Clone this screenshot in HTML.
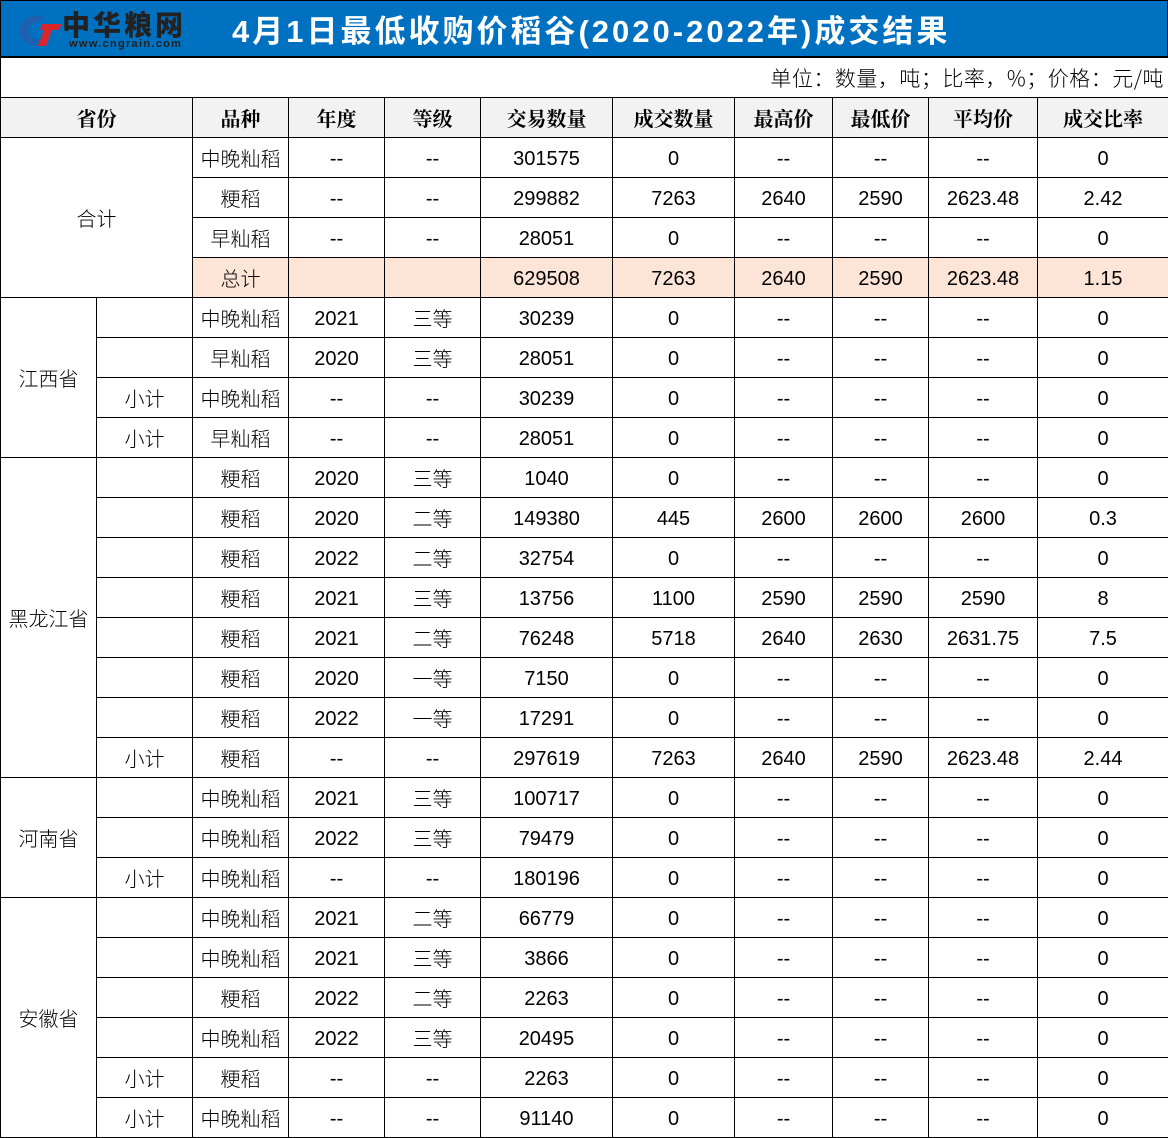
<!DOCTYPE html>
<html><head><meta charset="utf-8"><style>
*{margin:0;padding:0;box-sizing:border-box}
body{width:1168px;height:1138px;background:#fff;overflow:hidden;position:relative;font-family:"Liberation Sans","Noto Sans CJK SC",sans-serif}
.title{position:absolute;left:0;top:0;width:1168px;height:58px;background:#0070c0;border:1px solid #000;border-bottom:2px solid #000}
.title h1{position:absolute;left:231px;top:13px;font-size:31px;line-height:36px;color:#fff;font-weight:bold;letter-spacing:3px;white-space:nowrap;font-family:"Liberation Sans","Noto Sans CJK SC",sans-serif}
.logo{position:absolute;left:9px;top:12px}
.lt{position:absolute;left:61px;top:7px;font-size:28px;font-weight:900;color:#222;letter-spacing:3px;font-family:"Noto Sans CJK SC",sans-serif;line-height:32px}
.lu{position:absolute;left:68px;top:37px;font-size:11px;font-weight:bold;color:#222;letter-spacing:1.3px}
table{position:absolute;left:0;top:57px;border-collapse:collapse;table-layout:fixed;width:1168px}
td{border:1px solid #000;height:40px;text-align:center;font-size:20px;line-height:22px;color:#000;padding:2px 0 0;white-space:nowrap;vertical-align:middle;font-family:"Liberation Sans","Noto Sans CJK SC",sans-serif}
td.c{font-family:"Noto Sans CJK SC",sans-serif;font-weight:300;padding:0}
tr.h td{background:#f2f2f2;font-family:"Noto Serif CJK SC",serif;font-weight:bold;padding:0}
tr.u td{text-align:right;padding-right:4px;font-size:21px;letter-spacing:0.5px}
tr.t td{background:#fce4d6}
</style></head><body>
<div class="title">
<svg class="logo" width="52" height="34" viewBox="0 0 52 34"><path d="M34 4 A17 15 0 1 0 40 27 L30 27 A9 8 0 1 1 28 9 Z" fill="#1f5fb0"/><path d="M32 11 L52 11 L48 17 L42 17 L36 33 L28 33 L34 17 L30 17 Z" fill="#d8262c"/></svg>
<div class="lt">中华粮网</div><div class="lu">www.cngrain.com</div>
<h1>4月1日最低收购价稻谷(2020-2022年)成交结果</h1>
</div>
<table>
<colgroup><col style="width:96px"><col style="width:96px"><col style="width:96px"><col style="width:96px"><col style="width:96px"><col style="width:132px"><col style="width:122px"><col style="width:98px"><col style="width:96px"><col style="width:109px"><col style="width:131px"></colgroup>
<tr class="u"><td colspan="11" class="c">单位：数量，吨；比率，%；价格：元/吨</td></tr>
<tr class="h"><td colspan="2">省份</td><td>品种</td><td>年度</td><td>等级</td><td>交易数量</td><td>成交数量</td><td>最高价</td><td>最低价</td><td>平均价</td><td>成交比率</td></tr>
<tr><td colspan="2" rowspan="4" class="c">合计</td><td class="c">中晚籼稻</td><td>--</td><td>--</td><td>301575</td><td>0</td><td>--</td><td>--</td><td>--</td><td>0</td></tr>
<tr><td class="c">粳稻</td><td>--</td><td>--</td><td>299882</td><td>7263</td><td>2640</td><td>2590</td><td>2623.48</td><td>2.42</td></tr>
<tr><td class="c">早籼稻</td><td>--</td><td>--</td><td>28051</td><td>0</td><td>--</td><td>--</td><td>--</td><td>0</td></tr>
<tr class="t"><td class="c">总计</td><td></td><td></td><td>629508</td><td>7263</td><td>2640</td><td>2590</td><td>2623.48</td><td>1.15</td></tr>
<tr><td rowspan="4" class="c">江西省</td><td></td><td class="c">中晚籼稻</td><td>2021</td><td class="c">三等</td><td>30239</td><td>0</td><td>--</td><td>--</td><td>--</td><td>0</td></tr>
<tr><td></td><td class="c">早籼稻</td><td>2020</td><td class="c">三等</td><td>28051</td><td>0</td><td>--</td><td>--</td><td>--</td><td>0</td></tr>
<tr><td class="c">小计</td><td class="c">中晚籼稻</td><td>--</td><td>--</td><td>30239</td><td>0</td><td>--</td><td>--</td><td>--</td><td>0</td></tr>
<tr><td class="c">小计</td><td class="c">早籼稻</td><td>--</td><td>--</td><td>28051</td><td>0</td><td>--</td><td>--</td><td>--</td><td>0</td></tr>
<tr><td rowspan="8" class="c">黑龙江省</td><td></td><td class="c">粳稻</td><td>2020</td><td class="c">三等</td><td>1040</td><td>0</td><td>--</td><td>--</td><td>--</td><td>0</td></tr>
<tr><td></td><td class="c">粳稻</td><td>2020</td><td class="c">二等</td><td>149380</td><td>445</td><td>2600</td><td>2600</td><td>2600</td><td>0.3</td></tr>
<tr><td></td><td class="c">粳稻</td><td>2022</td><td class="c">二等</td><td>32754</td><td>0</td><td>--</td><td>--</td><td>--</td><td>0</td></tr>
<tr><td></td><td class="c">粳稻</td><td>2021</td><td class="c">三等</td><td>13756</td><td>1100</td><td>2590</td><td>2590</td><td>2590</td><td>8</td></tr>
<tr><td></td><td class="c">粳稻</td><td>2021</td><td class="c">二等</td><td>76248</td><td>5718</td><td>2640</td><td>2630</td><td>2631.75</td><td>7.5</td></tr>
<tr><td></td><td class="c">粳稻</td><td>2020</td><td class="c">一等</td><td>7150</td><td>0</td><td>--</td><td>--</td><td>--</td><td>0</td></tr>
<tr><td></td><td class="c">粳稻</td><td>2022</td><td class="c">一等</td><td>17291</td><td>0</td><td>--</td><td>--</td><td>--</td><td>0</td></tr>
<tr><td class="c">小计</td><td class="c">粳稻</td><td>--</td><td>--</td><td>297619</td><td>7263</td><td>2640</td><td>2590</td><td>2623.48</td><td>2.44</td></tr>
<tr><td rowspan="3" class="c">河南省</td><td></td><td class="c">中晚籼稻</td><td>2021</td><td class="c">三等</td><td>100717</td><td>0</td><td>--</td><td>--</td><td>--</td><td>0</td></tr>
<tr><td></td><td class="c">中晚籼稻</td><td>2022</td><td class="c">三等</td><td>79479</td><td>0</td><td>--</td><td>--</td><td>--</td><td>0</td></tr>
<tr><td class="c">小计</td><td class="c">中晚籼稻</td><td>--</td><td>--</td><td>180196</td><td>0</td><td>--</td><td>--</td><td>--</td><td>0</td></tr>
<tr><td rowspan="6" class="c">安徽省</td><td></td><td class="c">中晚籼稻</td><td>2021</td><td class="c">二等</td><td>66779</td><td>0</td><td>--</td><td>--</td><td>--</td><td>0</td></tr>
<tr><td></td><td class="c">中晚籼稻</td><td>2021</td><td class="c">三等</td><td>3866</td><td>0</td><td>--</td><td>--</td><td>--</td><td>0</td></tr>
<tr><td></td><td class="c">粳稻</td><td>2022</td><td class="c">二等</td><td>2263</td><td>0</td><td>--</td><td>--</td><td>--</td><td>0</td></tr>
<tr><td></td><td class="c">中晚籼稻</td><td>2022</td><td class="c">三等</td><td>20495</td><td>0</td><td>--</td><td>--</td><td>--</td><td>0</td></tr>
<tr><td class="c">小计</td><td class="c">粳稻</td><td>--</td><td>--</td><td>2263</td><td>0</td><td>--</td><td>--</td><td>--</td><td>0</td></tr>
<tr><td class="c">小计</td><td class="c">中晚籼稻</td><td>--</td><td>--</td><td>91140</td><td>0</td><td>--</td><td>--</td><td>--</td><td>0</td></tr>
</table>
</body></html>
